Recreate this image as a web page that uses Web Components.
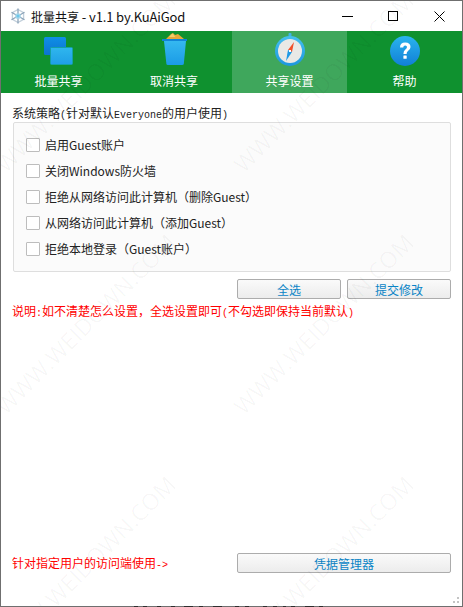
<!DOCTYPE html>
<html>
<head>
<meta charset="utf-8">
<style>
  html, body { margin: 0; padding: 0; background: #fff; }
  body { font-family: "Noto Sans CJK SC", "Liberation Sans", sans-serif; }
</style>
</head>
<body>
<app-window>
  <title-bar slot="title" text="批量共享" version=" - v1.1 by.KuAiGod"></title-bar>
  <nav-tabs slot="tabs">
    <nav-tab label="批量共享" icon="copy"></nav-tab>
    <nav-tab label="取消共享" icon="bin"></nav-tab>
    <nav-tab label="共享设置" icon="compass" active></nav-tab>
    <nav-tab label="帮助" icon="help"></nav-tab>
  </nav-tabs>
  <policy-group>
    <check-row>启用Guest账户</check-row>
    <check-row>关闭Windows防火墙</check-row>
    <check-row>拒绝从网络访问此计算机（删除Guest）</check-row>
    <check-row>从网络访问此计算机（添加Guest）</check-row>
    <check-row>拒绝本地登录（Guest账户）</check-row>
  </policy-group>
  <div style="display:flex;justify-content:flex-end;gap:6px;margin:7px 11px 0 0">
    <flat-button style="width:104px">全选</flat-button>
    <flat-button style="width:104px">提交修改</flat-button>
  </div>
  <red-note style="margin:4px 0 0 11px">说明<span style="font:10px 'Liberation Mono',monospace">:</span>如不清楚怎么设置，全选设置即可<span style="font:10px 'Liberation Mono',monospace">(</span>不勾选即保持当前默认<span style="font:10px 'Liberation Mono',monospace">)</span></red-note>
  <div style="display:flex;justify-content:space-between;align-items:center;margin:auto 11px 33px 11px">
    <red-note>针对指定用户的访问端使用<span style="font:10px 'Liberation Mono',monospace">-&gt;</span></red-note>
    <flat-button style="width:214px">凭据管理器</flat-button>
  </div>
</app-window>
<script>
const ICONS = {
  copy: `<svg width="46" height="46" viewBox="0 0 46 46">
    <defs><linearGradient id="c1" x1="0" y1="0" x2="0" y2="1"><stop offset="0" stop-color="#0f8fe6"/><stop offset="1" stop-color="#0c74cf"/></linearGradient>
    <linearGradient id="c2" x1="0" y1="0" x2="0" y2="1"><stop offset="0" stop-color="#2fb6ee"/><stop offset="1" stop-color="#1f9fe6"/></linearGradient></defs>
    <rect x="8" y="6" width="22" height="18" rx="1.5" fill="url(#c1)"/>
    <rect x="14.5" y="16.5" width="22" height="17" rx="1" fill="url(#c2)" stroke="#14a0a8" stroke-width="1"/>
  </svg>`,
  bin: `<svg width="46" height="46" viewBox="0 0 46 46">
    <defs><linearGradient id="b1" x1="0" y1="0" x2="0" y2="1"><stop offset="0" stop-color="#35b8f0"/><stop offset="1" stop-color="#1b9be6"/></linearGradient></defs>
    <path d="M15 8 L20 3 L22 2 L24 4 L27 3 L33 8 Z" fill="#e8a93a"/>
    <path d="M18 6 L21.5 2.5 L24.5 6 Z" fill="#f5cf6b"/>
    <rect x="11" y="8" width="25" height="2" fill="#1184d8"/>
    <path d="M13 10 H35 L32.8 33 Q32.6 34 31 34 H17 Q15.6 34 15.4 33 Z" fill="url(#b1)"/>
  </svg>`,
  compass: `<svg width="46" height="46" viewBox="0 0 46 46">
    <defs><linearGradient id="k1" x1="0" y1="0" x2="0" y2="1"><stop offset="0" stop-color="#45c0f0"/><stop offset="1" stop-color="#1d96df"/></linearGradient></defs>
    <rect x="21.5" y="2" width="3" height="4" rx="1" fill="#3fb4ea"/>
    <circle cx="23" cy="20" r="15" fill="url(#k1)"/>
    <circle cx="23" cy="20" r="12" fill="#e9e9e6"/>
    <path d="M27 11 L25 21 L21 19 Z" fill="#f0502a"/>
    <path d="M19 30 L21 19 L25 21 Z" fill="#1d9ae6"/>
    <rect x="22" y="19" width="2" height="2" fill="#fff"/>
  </svg>`,
  help: `<svg width="46" height="46" viewBox="0 0 46 46">
    <defs><linearGradient id="h1" x1="0" y1="0" x2="0" y2="1"><stop offset="0" stop-color="#2ab4ee"/><stop offset="1" stop-color="#117fd6"/></linearGradient></defs>
    <circle cx="23" cy="20" r="15" fill="url(#h1)"/>
    <path d="M18 16.5 Q18 11.5 23.2 11.5 Q28.5 11.5 28.5 16 Q28.5 18.5 26 20 Q24.6 21 24.6 23 H21.4 Q21.4 19.8 23.6 18.3 Q25 17.4 25 16 Q25 14.4 23.2 14.4 Q21.4 14.4 21.2 16.5 Z" fill="#fff"/>
    <rect x="21.4" y="24.4" width="3.3" height="3.3" rx=".5" fill="#fff"/>
  </svg>`,
};

// watermark tiles: start point of each line, runs up and to the right
const MARKS = [[7, 175], [245, 175], [7, 417], [245, 417], [7, 659], [245, 659]];

// dark specks along the bottom edge of the screenshot, as [x, width]
const SPECKS = [[134, 4], [143, 4], [157, 4], [171, 4], [184, 9], [199, 4], [213, 9], [235, 4], [245, 4], [263, 4], [273, 4], [283, 3], [291, 4], [305, 9], [319, 4]];

class AppWindow extends HTMLElement {
  constructor() {
    super();
    this.attachShadow({ mode: "open" });
    const marks = MARKS.map(([x, y]) => `<span class="mark" style="left:${x}px;top:${y - 24}px">WWW.WEIDOWN.COM</span>`).join("");
    const specks = SPECKS.map(([x, w]) => `<rect x="${x}" y="0" width="${w}" height="1"/>`).join("");
    this.shadowRoot.innerHTML = `
      <style>
        :host { display: flex; flex-direction: column; box-sizing: border-box; width: 463px; height: 607px;
          padding: 1px; background: #fff; position: relative; overflow: hidden; color: #222; }
        .frame { position: absolute; inset: 0; border: 1px solid #6f6f6f; pointer-events: none; }
        .specks { position: absolute; left: 0; bottom: 0; fill: #2e2e2e; }
        .marks { position: absolute; inset: 1px; pointer-events: none; overflow: hidden; }
        .mark { position: absolute; font: 23px/24px "Open Sans", "Liberation Sans", sans-serif; color: rgba(0,0,0,.035); white-space: nowrap;
          transform: rotate(-45deg); transform-origin: 0 100%; }
        .grip { position: absolute; right: 2px; bottom: 2px; width: 12px; height: 12px;
          background: radial-gradient(circle at 1px 1px, #c4c4c4 1px, transparent 1.1px) 0 0 / 4px 4px;
          clip-path: polygon(100% 0, 100% 100%, 0 100%); }
      </style>
      <slot name="title"></slot>
      <slot name="tabs"></slot>
      <slot></slot>
      <div class="marks">${marks}</div>
      <div class="grip"></div>
      <div class="frame"></div>
      <svg class="specks" width="463" height="1">${specks}</svg>`;
  }
}

class TitleBar extends HTMLElement {
  constructor() {
    super();
    this.attachShadow({ mode: "open" });
    this.shadowRoot.innerHTML = `
      <style>
        :host { display: flex; align-items: center; height: 30px; flex: none; background: #fff; }
        svg { flex: none; }
        .logo { margin-left: 9px; }
        .text { margin-left: 5px; font: 13px "Noto Sans CJK SC", sans-serif; color: #111; flex: 1; white-space: pre; }
        .cjk { font-size: 12px; }
        .ver { letter-spacing: -.12px; }
        .btn { width: 46px; display: flex; justify-content: center; }
      </style>
      <svg class="logo" width="16" height="16" viewBox="0 0 16 16" fill="none" stroke="#8ba3b8" stroke-width="1.3">
        <path d="M8 1.5l5.6 3.2v6.6L8 14.5l-5.6-3.2V4.7z" stroke="#c3d0db"/>
        <path d="M8 .5v15M1.5 4.2l13 7.6M14.5 4.2l-13 7.6"/>
        <circle cx="8" cy="8" r="2.2" fill="#6cc7ea" stroke="#a9d6ea"/>
      </svg>
      <span class="text"><span class="cjk"></span><span class="ver"></span></span>
      <span class="btn"><svg width="11" height="11" viewBox="0 0 11 11"><path d="M0 5.5h11" stroke="#000" fill="none"/></svg></span>
      <span class="btn"><svg width="11" height="11" viewBox="0 0 11 11"><rect x=".5" y=".5" width="9" height="9" stroke="#000" fill="none"/></svg></span>
      <span class="btn"><svg width="11" height="11" viewBox="0 0 11 11"><path d="M.5.5l10 10M10.5.5l-10 10" stroke="#000" fill="none"/></svg></span>`;
    this.shadowRoot.querySelector(".cjk").textContent = this.getAttribute("text");
    this.shadowRoot.querySelector(".ver").textContent = this.getAttribute("version");
  }
}

class NavTabs extends HTMLElement {
  constructor() {
    super();
    this.attachShadow({ mode: "open" });
    this.shadowRoot.innerHTML = `
      <style>
        :host { display: grid; grid-template-columns: 115px 116px 115px 1fr; height: 62px; flex: none; background: #0f912f; }
      </style>
      <slot></slot>`;
  }
}

class NavTab extends HTMLElement {
  constructor() {
    super();
    this.attachShadow({ mode: "open" });
    this.shadowRoot.innerHTML = `
      <style>
        :host { display: flex; flex-direction: column; align-items: center; color: #fff; }
        :host([active]) { background: #3fa75c; }
        .icon { height: 41px; width: 46px; }
        .label { font: 12px/18px "Noto Sans CJK SC", sans-serif; }
      </style>
      <div class="icon">${ICONS[this.getAttribute("icon")]}</div>
      <div class="label"></div>`;
    this.shadowRoot.querySelector(".label").textContent = this.getAttribute("label");
  }
}

class PolicyGroup extends HTMLElement {
  constructor() {
    super();
    this.attachShadow({ mode: "open" });
    this.shadowRoot.innerHTML = `
      <style>
        :host { display: block; margin: 11px 11px 0 11px; }
        .head { font: 12px/18px "Noto Sans CJK SC", sans-serif; color: #222; height: 18px; white-space: nowrap; }
        .m { font: 10px "Liberation Mono", monospace; }
        .box { box-sizing: border-box; height: 150px; margin-left: 1px; border: 1px solid #dedede; border-radius: 2px; background: #fbfbfb;
          padding: 10px 12px; display: flex; flex-direction: column; gap: 3px; }
      </style>
      <div class="head">系统策略<span class="m">(</span>针对默认<span class="m">Everyone</span>的用户使用<span class="m">)</span></div>
      <div class="box"><slot></slot></div>`;
  }
}

class CheckRow extends HTMLElement {
  constructor() {
    super();
    this.attachShadow({ mode: "open" });
    this.shadowRoot.innerHTML = `
      <style>
        :host { display: flex; align-items: center; height: 23px; font: 12px "Noto Sans CJK SC", "Liberation Sans", sans-serif; color: #222; white-space: nowrap; }
        .check { box-sizing: border-box; width: 14px; height: 14px; border: 1px solid #bdbdbd; background: #fff; border-radius: 1px; margin-right: 5px; flex: none; }
      </style>
      <span class="check"></span><slot></slot>`;
  }
}

class FlatButton extends HTMLElement {
  constructor() {
    super();
    this.attachShadow({ mode: "open" });
    this.shadowRoot.innerHTML = `
      <style>
        :host { display: flex; align-items: center; justify-content: center; box-sizing: border-box; height: 20px;
          border: 1px solid #acacac; border-radius: 2px; background: linear-gradient(#fafafa, #ececec);
          font: 12px "Noto Sans CJK SC", sans-serif; color: #0a84c6; }
      </style>
      <slot></slot>`;
  }
}

class RedNote extends HTMLElement {
  constructor() {
    super();
    this.attachShadow({ mode: "open" });
    this.shadowRoot.innerHTML = `
      <style>
        :host { display: block; font: 12px/16px "Noto Sans CJK SC", sans-serif; color: #f00; white-space: nowrap; }
      </style>
      <slot></slot>`;
  }
}

customElements.define("app-window", AppWindow);
customElements.define("title-bar", TitleBar);
customElements.define("nav-tabs", NavTabs);
customElements.define("nav-tab", NavTab);
customElements.define("policy-group", PolicyGroup);
customElements.define("check-row", CheckRow);
customElements.define("flat-button", FlatButton);
customElements.define("red-note", RedNote);
</script>
</body>
</html>
